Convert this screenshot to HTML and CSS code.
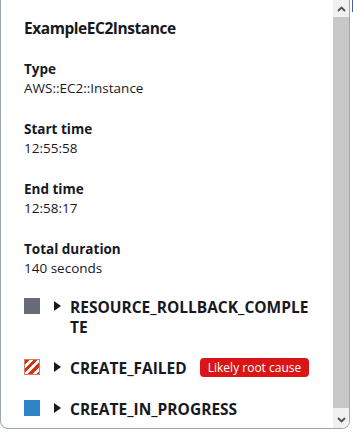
FILE: index.html
```html
<!DOCTYPE html>
<html>
<head>
<meta charset="utf-8">
<link rel="stylesheet" href="styles.css">
</head>
<body>
<div class="page">
  <div class="popover">
    <div class="content">
      <h2 class="title">ExampleEC2Instance</h2>
      <div class="field"><div class="label">Type</div><div class="value">AWS::EC2::Instance</div></div>
      <div class="field"><div class="label">Start time</div><div class="value">12:55:58</div></div>
      <div class="field"><div class="label">End time</div><div class="value">12:58:17</div></div>
      <div class="field"><div class="label">Total duration</div><div class="value">140 seconds</div></div>
      <div class="events">
        <div class="event">
          <span class="swatch gray"></span>
          <span class="caret"></span>
          <span class="status">RESOURCE_ROLLBACK_COMPLETE</span>
        </div>
        <div class="event">
          <span class="swatch failed"></span>
          <span class="caret"></span>
          <span class="status keep">CREATE_FAILED</span>
          <span class="badge">Likely root cause</span>
        </div>
        <div class="event">
          <span class="swatch blue"></span>
          <span class="caret"></span>
          <span class="status">CREATE_IN_PROGRESS</span>
        </div>
      </div>
    </div>
    <div class="scrollbar">
      <div class="sb-btn up"><svg width="9" height="6" viewBox="0 0 9 6"><path d="M1 5 L4.5 1.5 L8 5" fill="none" stroke="#505050" stroke-width="1.8"/></svg></div>
      <div class="sb-thumb"></div>
      <div class="sb-track"></div>
      <div class="sb-btn down"><svg width="9" height="6" viewBox="0 0 9 6"><path d="M1 1 L4.5 4.5 L8 1" fill="none" stroke="#505050" stroke-width="1.8"/></svg></div>
    </div>
  </div>
  <div class="outside">
    <span class="mark blue-mark"></span>
  </div>
</div>
</body>
</html>
```
FILE: styles.css
```css
html, body {
  margin: 0;
  padding: 0;
  background: #ffffff;
  overflow: hidden;
}
body {
  font-family: "Open Sans", "Noto Sans", sans-serif;
  color: #16191f;
}
.page {
  display: flex;
  width: 353px;
  height: 433px;
}
.popover {
  width: 348px;
  height: 428px;
  border: 1px solid #9ba7b6;
  border-top: none;
  border-radius: 0 0 8px 8px;
  display: flex;
  overflow: hidden;
  background: #fff;
  flex: none;
}
.content {
  flex: 1;
  padding: 16px 20px 0 23px;
  display: flex;
  flex-direction: column;
  gap: 20px;
  min-width: 0;
}
.title {
  margin: 0;
  font-size: 15.5px;
  line-height: 24px;
  font-weight: 700;
  letter-spacing: -0.45px;
}
.field {
  font-size: 13.5px;
  line-height: 19px;
  margin-bottom: 2px;
}
.label {
  font-weight: 700;
}
.events {
  display: flex;
  flex-direction: column;
  gap: 21px;
  margin-top: -3px;
}
.event {
  display: flex;
  align-items: flex-start;
  font-size: 15.5px;
  line-height: 20px;
  font-weight: 700;
}
.swatch {
  width: 16px;
  height: 16px;
  flex: none;
  margin-top: 1px;
}
.gray { background: #686c76; }
.blue { background: #2e84c6; }
.failed {
  box-sizing: border-box;
  border: 1px solid #e07a5f;
  background: repeating-linear-gradient(135deg, #d13212 0 3px, #ffffff 3px 6px);
}
.caret {
  width: 0;
  height: 0;
  border-top: 5px solid transparent;
  border-bottom: 5px solid transparent;
  border-left: 7px solid #16191f;
  margin: 4px 9px 0 14px;
  flex: none;
}
.status {
  word-break: break-all;
  min-width: 0;
}
.status.keep {
  flex: none;
  white-space: nowrap;
}
.badge {
  flex: none;
  margin: 0 0 0 13px;
  background: #d91515;
  color: #fff;
  font-weight: 400;
  font-size: 12px;
  line-height: 19px;
  padding: 0 8px;
  border-radius: 4px;
  white-space: nowrap;
}
.scrollbar {
  width: 16px;
  flex: none;
  display: flex;
  flex-direction: column;
  background: #f1f1f1;
}
.sb-btn {
  height: 17px;
  display: flex;
  align-items: center;
  justify-content: center;
  flex: none;
}
.sb-thumb {
  height: 391px;
  background: #c8c8c8;
  flex: none;
}
.sb-track { flex: 1; }
.outside {
  flex: 1;
  position: relative;
  background: #fff;
}
.blue-mark {
  position: absolute;
  left: 2px;
  top: 0;
  width: 2px;
  height: 12px;
  background: #1f6fb8;
}
```
